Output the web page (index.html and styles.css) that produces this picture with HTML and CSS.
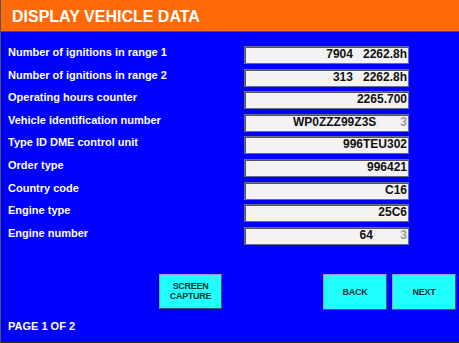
FILE: index.html
```html
<!DOCTYPE html>
<html lang="en">
<head>
    <meta charset="UTF-8">
    <meta name="viewport" content="width=device-width, initial-scale=1.0">
    <title>Display Vehicle Data</title>
    <link rel="stylesheet" href="styles.css">
</head>
<body>
    <div class="screen">
        <div class="title-bar">DISPLAY VEHICLE DATA</div>

        <div class="content">
            <div class="rows">
                <div class="row">
                    <div class="label">Number of ignitions in range 1</div>
                    <div class="value">7904   2262.8h</div>
                </div>
                <div class="row">
                    <div class="label">Number of ignitions in range 2</div>
                    <div class="value">313   2262.8h</div>
                </div>
                <div class="row">
                    <div class="label">Operating hours counter</div>
                    <div class="value">2265.700</div>
                </div>
                <div class="row">
                    <div class="label">Vehicle identification number</div>
                    <div class="value">WP0ZZZ99Z3S<span class="blur">(      </span><span class="faint">3</span></div>
                </div>
                <div class="row">
                    <div class="label">Type ID DME control unit</div>
                    <div class="value">996TEU302</div>
                </div>
                <div class="row">
                    <div class="label">Order type</div>
                    <div class="value">996421</div>
                </div>
                <div class="row">
                    <div class="label">Country code</div>
                    <div class="value">C16</div>
                </div>
                <div class="row">
                    <div class="label">Engine type</div>
                    <div class="value">25C6</div>
                </div>
                <div class="row">
                    <div class="label">Engine number</div>
                    <div class="value">64<span class="blur">(       </span><span class="faint">3</span></div>
                </div>
            </div>

            <div class="buttons">
                <button class="btn btn-capture">SCREEN<br>CAPTURE</button>
                <div class="nav">
                    <button class="btn">BACK</button>
                    <button class="btn">NEXT</button>
                </div>
            </div>

            <div class="page-no">PAGE 1 OF 2</div>
        </div>
    </div>
</body>
</html>
```

FILE: styles.css
```css
body {
    margin: 0;
    font-family: "Liberation Sans", Arial, sans-serif;
    background-color: #0000ff;
}
.screen {
    width: 459px;
    height: 343px;
    box-sizing: border-box;
    border-left: 1px solid #555;
    border-bottom: 1px solid #333;
    background-color: #0000ff;
    display: flex;
    flex-direction: column;
    overflow: hidden;
}
.title-bar {
    height: 32px;
    box-sizing: border-box;
    padding-left: 11px;
    background-color: #ff6a08;
    border-bottom: 1px solid #8a3a18;
    color: white;
    font-size: 16px;
    font-weight: bold;
    line-height: 33px;
    overflow: hidden;
}
.content {
    flex: 1;
    display: flex;
    flex-direction: column;
    padding: 14px 0 0 7px;
}
.rows {
    display: flex;
    flex-direction: column;
    gap: 4.6px;
}
.row {
    display: grid;
    grid-template-columns: 236px 165px;
    height: 18px;
}
.label {
    color: white;
    font-size: 11px;
    font-weight: bold;
    line-height: 12px;
}
.value {
    box-sizing: border-box;
    height: 18px;
    padding-right: 1px;
    background-color: #f3f3f3;
    border: 1px solid #6c6c90;
    box-shadow: inset 1px 1px 0 #555;
    color: #111;
    font-size: 12px;
    font-weight: bold;
    line-height: 15px;
    text-align: right;
    white-space: pre;
}
.blur {
    color: #e6e6e6;
    font-weight: normal;
}
.faint {
    color: #999;
}
.buttons {
    display: flex;
    justify-content: space-between;
    margin-top: 29px;
    padding-left: 151px;
    padding-right: 3px;
}
.nav {
    display: flex;
    gap: 5px;
}
.btn {
    width: 64px;
    height: 36px;
    padding: 0;
    background-color: #22ffff;
    border: 1px solid;
    border-color: #9a9cf0 #2f5a6a #2f5a6a #9a9cf0;
    color: #073535;
    font-family: "Liberation Sans", Arial, sans-serif;
    font-size: 9px;
    font-weight: bold;
    letter-spacing: -0.3px;
    line-height: 10px;
    cursor: pointer;
}
.btn-capture {
    width: 63px;
    height: 35px;
}
.page-no {
    margin-top: 10px;
    color: white;
    font-size: 11px;
    font-weight: bold;
    line-height: 12px;
}
```
